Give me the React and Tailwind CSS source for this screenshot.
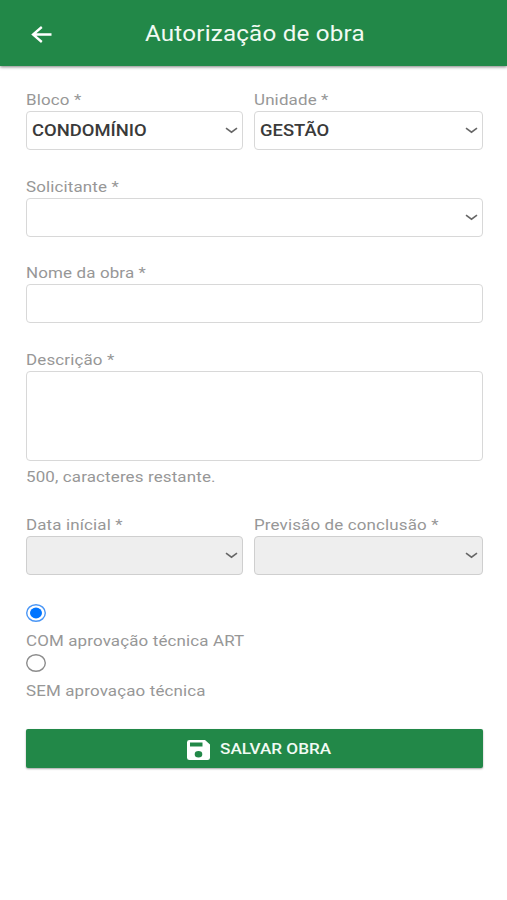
import React from "react";

function Label({ children }) {
  return (
    <div className="h-[18px] whitespace-nowrap text-[15px] leading-[18px] text-[#979797]">
      <span className="inline-block origin-left scale-x-[1.13] tracking-[0.12px]">{children}</span>
    </div>
  );
}

function Chevron() {
  return (
    <svg className="h-[7px] w-[13px] shrink-0" viewBox="0 0 13 7" fill="none">
      <path d="M1 1.2 L6.5 5.2 L12 1.2" stroke="#666666" strokeWidth="1.6" />
    </svg>
  );
}

function Field({ label, value, select, disabled, tall }) {
  return (
    <div>
      <Label>{label}</Label>
      <div
        className={`mt-[2px] flex items-center justify-between rounded-[4px] border pl-[5px] pr-1 ${
          tall ? "h-[90px]" : "h-[39px]"
        } ${disabled ? "border-[#cfcfcf] bg-[#eeeeee]" : "border-[#d8d8d8] bg-white"}`}
      >
        <span className="inline-block origin-left translate-y-[1px] scale-x-[1.13] whitespace-nowrap text-[16.3px] font-medium text-[#3a3a3a]">
          {value}
        </span>
        {select ? <Chevron /> : null}
      </div>
    </div>
  );
}

function Radio({ label, checked }) {
  return (
    <div className="h-[50px]">
      <svg className="block h-[18px] w-[20px]" viewBox="0 0 20 18" fill="none">
        <ellipse cx="10" cy="9" rx="9.3" ry="8.3" stroke={checked ? "#4a96f5" : "#8c8c8c"} strokeWidth="1.4" />
        {checked ? <ellipse cx="10" cy="9" rx="6" ry="5.4" fill="#0075ff" /> : null}
      </svg>
      <div className="mt-[10px]">
        <Label>{label}</Label>
      </div>
    </div>
  );
}

export default function App() {
  return (
    <div className="h-[900px] w-full overflow-hidden bg-white font-['Roboto',sans-serif]">
      <header className="flex h-[66px] items-center bg-[#228848] shadow-[0_1px_3px_rgba(0,0,0,0.5)]">
        <svg className="ml-[31px] mt-[2px] h-[17px] w-[21px]" viewBox="0 0 21 17" fill="none">
          <path d="M10.8 1 L2 8.5 L10.8 16 M2 8.5 H20.5" stroke="white" strokeWidth="2.3" />
        </svg>
        <h1 className="ml-[92.5px] mt-[3px] origin-left scale-x-[1.13] whitespace-nowrap text-[21.4px] font-normal tracking-[0.18px] text-[#f1faf3]">
          Autorização de obra
        </h1>
      </header>

      <main className="pl-[26px] pr-[24px] pt-[25px]">
        <div className="grid grid-cols-[217px_1fr] gap-x-[11px]">
          <Field label="Bloco *" value="CONDOMÍNIO" select />
          <Field label="Unidade *" value="GESTÃO" select />
        </div>
        <div className="mt-[27.6px]">
          <Field label="Solicitante *" select />
        </div>
        <div className="mt-[27.6px]">
          <Field label="Nome da obra *" />
        </div>
        <div className="mt-[27.6px]">
          <Field label="Descrição *" tall />
        </div>
        <div className="mt-[7px]">
          <Label>500, caracteres restante.</Label>
        </div>
        <div className="mt-[30px] grid grid-cols-[217px_1fr] gap-x-[11px]">
          <Field label="Data inícial *" select disabled />
          <Field label="Previsão de conclusão *" select disabled />
        </div>

        <div className="mt-[29px]">
          <Radio label="COM aprovação técnica ART" checked />
          <Radio label="SEM aprovaçao técnica" />
        </div>

        <button className="mt-[25px] flex h-[39px] w-full items-center rounded-[2px] bg-[#228848] pl-[161px] shadow-[0_1px_2px_rgba(0,0,0,0.35)]">
          <svg className="mt-[3px] h-[20px] w-[23px]" viewBox="0 0 23 20">
            <path
              fill="white"
              fillRule="evenodd"
              d="M2.5 0 H18 L23 4.5 V17.8 Q23 20 20.5 20 H2.5 Q0 20 0 17.8 V2.2 Q0 0 2.5 0 Z M3 2.4 V6.6 H15.5 V2.4 Z M11.5 11 A3.8 3.3 0 1 0 11.5 17.6 A3.8 3.3 0 1 0 11.5 11 Z"
            />
          </svg>
          <span className="ml-[10px] mt-[2px] origin-left scale-x-[1.13] whitespace-nowrap text-[15.2px] font-medium text-[#f1faf3]">
            SALVAR OBRA
          </span>
        </button>
      </main>
    </div>
  );
}
